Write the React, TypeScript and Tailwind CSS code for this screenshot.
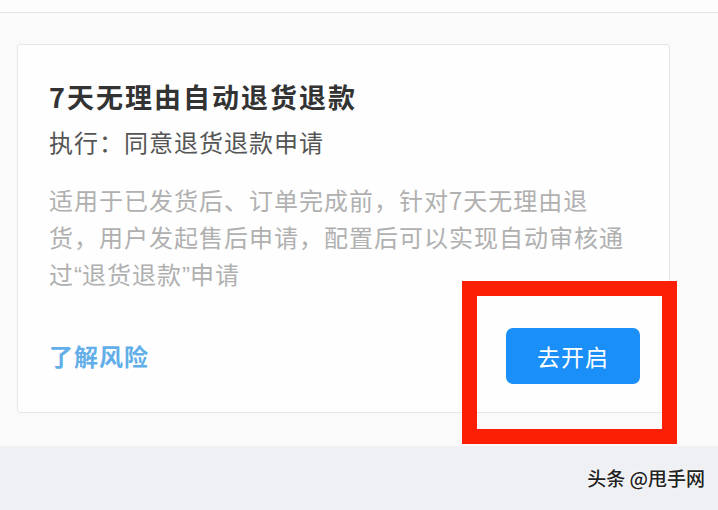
import React from "react";

export default function App() {
  const q = "font-['Liberation_Sans'] tracking-[0px]";
  return (
    <div
      className="relative w-[718px] h-[510px] overflow-hidden bg-[#fafafa]"
      style={{ fontFamily: '"Noto Sans CJK SC", "Noto Sans", sans-serif' }}
    >
      <div className="h-[13px] bg-[#fdfdfd] border-b border-[#e3e3e3]" />
      <div className="h-[433px] px-[17px] pt-[31px]">
        <div className="w-[653px] h-[369px] bg-[#fefefe] border border-[#e6e6e6] rounded-[3px] pl-[31px] pr-[29px] pt-[34px]">
          <div className="text-[27px] leading-[36px] font-bold text-[#333333] tracking-[2px]">
            7天无理由自动退货退款
          </div>
          <div className="mt-[9px] text-[24px] leading-[36px] text-[#555555] tracking-[1px]">
            执行：同意退货退款申请
          </div>
          <div className="mt-[21px] text-[24px] leading-[37px] text-[#b0b0b0] tracking-[1px] w-[600px]">
            <div>适用于已发货后、订单完成前，针对7天无理由退</div>
            <div>货，用户发起售后申请，配置后可以实现自动审核通</div>
            <div>
              过<span className={q}>“</span>退货退款<span className={q}>”</span>申请
            </div>
          </div>
          <div className="mt-[34px] flex items-center justify-between">
            <span className="text-[24px] font-bold text-[#62aee8] tracking-[1px]">了解风险</span>
            <button className="w-[134px] h-[56px] rounded-[7px] bg-[#1a8ff8] text-white text-[23px] tracking-[1px]">
              去开启
            </button>
          </div>
        </div>
      </div>
      <div className="h-[64px] bg-[#eef0f3] flex items-center justify-end pr-[13px]">
        <span
          className="text-[19px] font-medium text-[#222222] tracking-[0px]"
          style={{ textShadow: "0 0 2px #fff, 0 0 2px #fff" }}
        >
          头条 @甩手网
        </span>
      </div>
      <div className="absolute left-[462px] top-[281px] w-[215px] h-[163px] border-[15px] border-[#fb1f05]" />
    </div>
  );
}
